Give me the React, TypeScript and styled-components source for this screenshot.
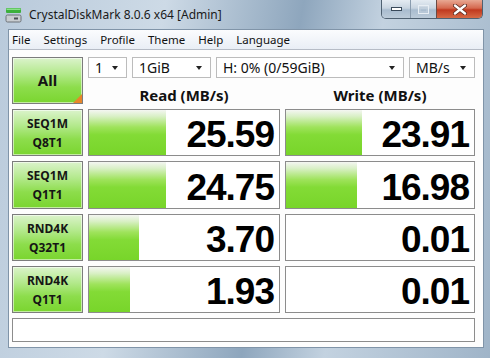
import styled, { createGlobalStyle } from "styled-components";

const GlobalStyle = createGlobalStyle`
    html, body { margin: 0; padding: 0; overflow: hidden; }
    * { box-sizing: border-box; }
`;

const Window = styled.div`
    width: 490px;
    height: 358px;
    display: flex;
    flex-direction: column;
    background: linear-gradient(100deg, #b9cadb 0%, #cddae6 30%, #8ea6bd 55%, #c3d2e0 70%, #9fb4c8 100%);
    font-family: "Noto Sans", "Open Sans", sans-serif;
`;
const TitleBar = styled.div`
    height: 29px;
    display: flex;
    align-items: center;
    padding-left: 5px;
`;
const Title = styled.span`
    font-size: 12px;
    color: #1a1a1a;
    margin-left: 7px;
`;
const Controls = styled.div`
    margin-left: auto;
    margin-right: 7px;
    align-self: flex-start;
    display: flex;
    height: 19px;
    border: 1px solid #4f6172;
    border-top: none;
    border-radius: 0 0 5px 5px;
    overflow: hidden;
`;
const CtrlButton = styled.div<{ $w: number; $close?: boolean }>`
    width: ${p => p.$w}px;
    display: flex;
    align-items: center;
    justify-content: center;
    border-left: ${p => (p.$close ? "1px solid #6a4a44" : "1px solid #8a9cae")};
    background: ${p => (p.$close
        ? "linear-gradient(#e8a893 0%, #d5694f 45%, #c0391f 55%, #d76a45 100%)"
        : "linear-gradient(#e4ebf2 0%, #c9d5e1 45%, #a9bccf 55%, #bccbd9 100%)")};
    &:first-child { border-left: none; }
`;
const Client = styled.div`
    flex: 1;
    margin: 0 6px 10px 8px;
    background: #fdfdfd;
    border: 1px solid #8094a8;
    display: flex;
    flex-direction: column;
`;
const MenuBar = styled.div`
    height: 20px;
    display: flex;
    align-items: center;
    padding-left: 3px;
    background: linear-gradient(#fbfcfe, #e9eef5);
    border-bottom: 1px solid #b6bcc6;
    font-size: 11.5px;
    color: #111;
`;
const MenuItem = styled.span`
    margin-right: 13px;
`;
const Panel = styled.div`
    display: grid;
    grid-template-columns: 71px 192px 190px;
    grid-template-rows: 47px 47px 48px 47px 47px 24px;
    column-gap: 5px;
    row-gap: 5px;
    padding: 7px 0 0 3px;
`;
const GreenButton = styled.div<{ $big?: boolean }>`
    position: relative;
    border: 1px solid #7c7c7c;
    box-shadow: inset 0 0 0 1px rgba(255, 255, 255, 0.55);
    background: linear-gradient(#dbf3cb 0%, #b3e98c 35%, #8ddd4c 65%, #7ad52f 100%);
    display: flex;
    flex-direction: column;
    align-items: center;
    justify-content: center;
    font-weight: 700;
    font-size: ${p => (p.$big ? "15px" : "12px")};
    line-height: 19px;
    color: #151515;
`;
const Corner = styled.div`
    position: absolute;
    right: 0;
    bottom: 0;
    width: 0;
    height: 0;
    border-style: solid;
    border-width: 0 0 9px 9px;
    border-color: transparent transparent #e8862a transparent;
`;
const TopCell = styled.div`
    grid-column: 2 / 4;
    display: flex;
    flex-direction: column;
`;
const Selects = styled.div`
    display: flex;
    gap: 5px;
    height: 23px;
`;
const Select = styled.div<{ $w: number }>`
    width: ${p => p.$w}px;
    border: 1px solid #bcbcbc;
    background: #fff;
    display: flex;
    align-items: center;
    padding: 0 0 0 6px;
    font-size: 14px;
    color: #111;
    &::after {
        content: "";
        margin-left: auto;
        margin-right: 8px;
        border-style: solid;
        border-width: 4px 3.5px 0 3.5px;
        border-color: #222 transparent transparent transparent;
    }
`;
const Headers = styled.div`
    display: grid;
    grid-template-columns: 192px 190px;
    column-gap: 5px;
    flex: 1;
`;
const Header = styled.div`
    display: flex;
    align-items: center;
    justify-content: center;
    padding-top: 7px;
    font-weight: 700;
    font-size: 15px;
    color: #111;
`;
const ValueBox = styled.div<{ $fill: number }>`
    border: 1px solid #8c8c8c;
    background-color: #fff;
    background-image: linear-gradient(#f4f6f2 0%, #d9f0c6 14%, #9fe35c 38%, #83db36 55%, #78d52a 100%);
    background-size: ${p => p.$fill}px 100%;
    background-repeat: no-repeat;
    display: flex;
    align-items: center;
    justify-content: flex-end;
    padding: 5px 5px 0 0;
    font-family: "Liberation Sans", "Noto Sans", sans-serif;
    font-weight: 700;
    font-size: 37px;
    letter-spacing: -1px;
    color: #000;
`;
const StatusBar = styled.div`
    grid-column: 1 / 4;
    border: 1px solid #8c8c8c;
    background: #fff;
`;

const AppIcon = () => (
    <svg width="17" height="16" viewBox="0 0 17 16">
        <rect x="1" y="1" width="15" height="5" rx="1" fill="#3cb03c" />
        <rect x="1.5" y="1.5" width="14" height="1.5" fill="#8be08b" />
        <rect x="1" y="8" width="15" height="7" rx="1.5" fill="#c8ccd0" stroke="#6c7278" />
        <rect x="9" y="10.5" width="4" height="2" fill="#4a4f55" />
    </svg>
);

const rows = [
    { a: "SEQ1M", b: "Q8T1", read: "25.59", rf: 77, write: "23.91", wf: 76 },
    { a: "SEQ1M", b: "Q1T1", read: "24.75", rf: 77, write: "16.98", wf: 71 },
    { a: "RND4K", b: "Q32T1", read: "3.70", rf: 50, write: "0.01", wf: 0 },
    { a: "RND4K", b: "Q1T1", read: "1.93", rf: 41, write: "0.01", wf: 0 },
];

const App = () => {
    return (<>
        <GlobalStyle />
        <Window>
            <TitleBar>
                <AppIcon />
                <Title>CrystalDiskMark 8.0.6 x64 [Admin]</Title>
                <Controls>
                    <CtrlButton $w={28}>
                        <svg width="11" height="4"><rect x="0.5" y="0.5" width="10" height="3" fill="#fff" stroke="#39495a" /></svg>
                    </CtrlButton>
                    <CtrlButton $w={26}>
                        <svg width="11" height="9"><rect x="0.5" y="0.5" width="10" height="8" fill="none" stroke="#e8eef4" strokeWidth="1" /><rect x="2" y="2.5" width="7" height="4.5" fill="none" stroke="#c2cfdc" /></svg>
                    </CtrlButton>
                    <CtrlButton $w={46} $close>
                        <svg width="14" height="11" viewBox="0 0 14 11">
                            <path d="M2 1.5 L12 9.5 M12 1.5 L2 9.5" stroke="#5a2a20" strokeWidth="4" strokeLinecap="round" />
                            <path d="M2 1.5 L12 9.5 M12 1.5 L2 9.5" stroke="#fff" strokeWidth="2.4" strokeLinecap="round" />
                        </svg>
                    </CtrlButton>
                </Controls>
            </TitleBar>
            <Client>
                <MenuBar>
                    <MenuItem>File</MenuItem>
                    <MenuItem>Settings</MenuItem>
                    <MenuItem>Profile</MenuItem>
                    <MenuItem>Theme</MenuItem>
                    <MenuItem>Help</MenuItem>
                    <MenuItem>Language</MenuItem>
                </MenuBar>
                <Panel>
                    <GreenButton $big>All<Corner /></GreenButton>
                    <TopCell>
                        <Selects>
                            <Select $w={39}>1</Select>
                            <Select $w={79}>1GiB</Select>
                            <Select $w={188}>H: 0% (0/59GiB)</Select>
                            <Select $w={66}>MB/s</Select>
                        </Selects>
                        <Headers>
                            <Header>Read (MB/s)</Header>
                            <Header>Write (MB/s)</Header>
                        </Headers>
                    </TopCell>
                    {rows.map(r => (<>
                        <GreenButton key={r.b + r.a}><span>{r.a}</span><span>{r.b}</span></GreenButton>
                        <ValueBox $fill={r.rf}>{r.read}</ValueBox>
                        <ValueBox $fill={r.wf}>{r.write}</ValueBox>
                    </>))}
                    <StatusBar />
                </Panel>
            </Client>
        </Window>
    </>);
};
export default App;
